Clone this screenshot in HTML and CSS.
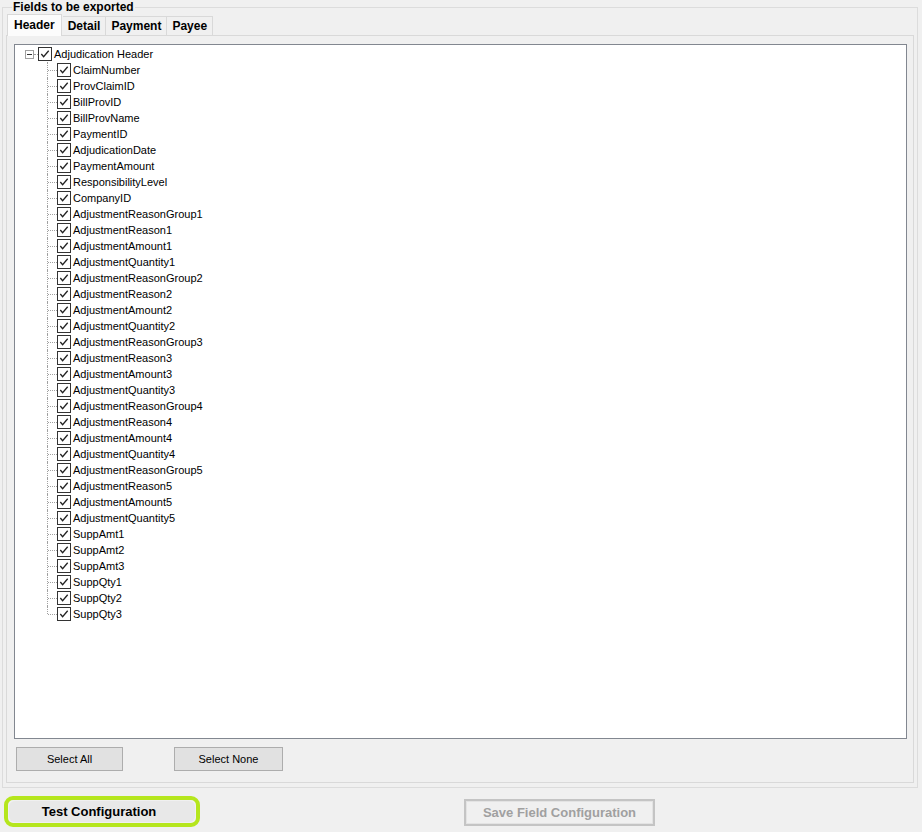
FILE: index.html
```html
<!DOCTYPE html>
<html lang="en">
<head>
  <meta charset="UTF-8" />
  <title>Fields to be exported</title>
  <link rel="stylesheet" href="styles.css">
</head>
<body>
  <fieldset class="group">
    <legend>Fields to be exported</legend>
    <div class="tabs">
      <div class="tab selected">Header</div>
      <div class="tab">Detail</div>
      <div class="tab">Payment</div>
      <div class="tab">Payee</div>
    </div>
    <div class="tab-page">
      <div class="tree">
        <div class="node root">
          <span class="expander"></span>
          <span class="stub"></span>
          <span class="check"><svg viewBox="0 0 13 13"><polyline points="2.5,6.5 5,9.5 10.5,3"/></svg></span>
          <span class="label">Adjudication Header</span>
        </div>
        <div class="children">
          <div class="node"><span class="branch"></span><span class="check"><svg viewBox="0 0 13 13"><polyline points="2.5,6.5 5,9.5 10.5,3"/></svg></span><span class="label">ClaimNumber</span></div>
          <div class="node"><span class="branch"></span><span class="check"><svg viewBox="0 0 13 13"><polyline points="2.5,6.5 5,9.5 10.5,3"/></svg></span><span class="label">ProvClaimID</span></div>
          <div class="node"><span class="branch"></span><span class="check"><svg viewBox="0 0 13 13"><polyline points="2.5,6.5 5,9.5 10.5,3"/></svg></span><span class="label">BillProvID</span></div>
          <div class="node"><span class="branch"></span><span class="check"><svg viewBox="0 0 13 13"><polyline points="2.5,6.5 5,9.5 10.5,3"/></svg></span><span class="label">BillProvName</span></div>
          <div class="node"><span class="branch"></span><span class="check"><svg viewBox="0 0 13 13"><polyline points="2.5,6.5 5,9.5 10.5,3"/></svg></span><span class="label">PaymentID</span></div>
          <div class="node"><span class="branch"></span><span class="check"><svg viewBox="0 0 13 13"><polyline points="2.5,6.5 5,9.5 10.5,3"/></svg></span><span class="label">AdjudicationDate</span></div>
          <div class="node"><span class="branch"></span><span class="check"><svg viewBox="0 0 13 13"><polyline points="2.5,6.5 5,9.5 10.5,3"/></svg></span><span class="label">PaymentAmount</span></div>
          <div class="node"><span class="branch"></span><span class="check"><svg viewBox="0 0 13 13"><polyline points="2.5,6.5 5,9.5 10.5,3"/></svg></span><span class="label">ResponsibilityLevel</span></div>
          <div class="node"><span class="branch"></span><span class="check"><svg viewBox="0 0 13 13"><polyline points="2.5,6.5 5,9.5 10.5,3"/></svg></span><span class="label">CompanyID</span></div>
          <div class="node"><span class="branch"></span><span class="check"><svg viewBox="0 0 13 13"><polyline points="2.5,6.5 5,9.5 10.5,3"/></svg></span><span class="label">AdjustmentReasonGroup1</span></div>
          <div class="node"><span class="branch"></span><span class="check"><svg viewBox="0 0 13 13"><polyline points="2.5,6.5 5,9.5 10.5,3"/></svg></span><span class="label">AdjustmentReason1</span></div>
          <div class="node"><span class="branch"></span><span class="check"><svg viewBox="0 0 13 13"><polyline points="2.5,6.5 5,9.5 10.5,3"/></svg></span><span class="label">AdjustmentAmount1</span></div>
          <div class="node"><span class="branch"></span><span class="check"><svg viewBox="0 0 13 13"><polyline points="2.5,6.5 5,9.5 10.5,3"/></svg></span><span class="label">AdjustmentQuantity1</span></div>
          <div class="node"><span class="branch"></span><span class="check"><svg viewBox="0 0 13 13"><polyline points="2.5,6.5 5,9.5 10.5,3"/></svg></span><span class="label">AdjustmentReasonGroup2</span></div>
          <div class="node"><span class="branch"></span><span class="check"><svg viewBox="0 0 13 13"><polyline points="2.5,6.5 5,9.5 10.5,3"/></svg></span><span class="label">AdjustmentReason2</span></div>
          <div class="node"><span class="branch"></span><span class="check"><svg viewBox="0 0 13 13"><polyline points="2.5,6.5 5,9.5 10.5,3"/></svg></span><span class="label">AdjustmentAmount2</span></div>
          <div class="node"><span class="branch"></span><span class="check"><svg viewBox="0 0 13 13"><polyline points="2.5,6.5 5,9.5 10.5,3"/></svg></span><span class="label">AdjustmentQuantity2</span></div>
          <div class="node"><span class="branch"></span><span class="check"><svg viewBox="0 0 13 13"><polyline points="2.5,6.5 5,9.5 10.5,3"/></svg></span><span class="label">AdjustmentReasonGroup3</span></div>
          <div class="node"><span class="branch"></span><span class="check"><svg viewBox="0 0 13 13"><polyline points="2.5,6.5 5,9.5 10.5,3"/></svg></span><span class="label">AdjustmentReason3</span></div>
          <div class="node"><span class="branch"></span><span class="check"><svg viewBox="0 0 13 13"><polyline points="2.5,6.5 5,9.5 10.5,3"/></svg></span><span class="label">AdjustmentAmount3</span></div>
          <div class="node"><span class="branch"></span><span class="check"><svg viewBox="0 0 13 13"><polyline points="2.5,6.5 5,9.5 10.5,3"/></svg></span><span class="label">AdjustmentQuantity3</span></div>
          <div class="node"><span class="branch"></span><span class="check"><svg viewBox="0 0 13 13"><polyline points="2.5,6.5 5,9.5 10.5,3"/></svg></span><span class="label">AdjustmentReasonGroup4</span></div>
          <div class="node"><span class="branch"></span><span class="check"><svg viewBox="0 0 13 13"><polyline points="2.5,6.5 5,9.5 10.5,3"/></svg></span><span class="label">AdjustmentReason4</span></div>
          <div class="node"><span class="branch"></span><span class="check"><svg viewBox="0 0 13 13"><polyline points="2.5,6.5 5,9.5 10.5,3"/></svg></span><span class="label">AdjustmentAmount4</span></div>
          <div class="node"><span class="branch"></span><span class="check"><svg viewBox="0 0 13 13"><polyline points="2.5,6.5 5,9.5 10.5,3"/></svg></span><span class="label">AdjustmentQuantity4</span></div>
          <div class="node"><span class="branch"></span><span class="check"><svg viewBox="0 0 13 13"><polyline points="2.5,6.5 5,9.5 10.5,3"/></svg></span><span class="label">AdjustmentReasonGroup5</span></div>
          <div class="node"><span class="branch"></span><span class="check"><svg viewBox="0 0 13 13"><polyline points="2.5,6.5 5,9.5 10.5,3"/></svg></span><span class="label">AdjustmentReason5</span></div>
          <div class="node"><span class="branch"></span><span class="check"><svg viewBox="0 0 13 13"><polyline points="2.5,6.5 5,9.5 10.5,3"/></svg></span><span class="label">AdjustmentAmount5</span></div>
          <div class="node"><span class="branch"></span><span class="check"><svg viewBox="0 0 13 13"><polyline points="2.5,6.5 5,9.5 10.5,3"/></svg></span><span class="label">AdjustmentQuantity5</span></div>
          <div class="node"><span class="branch"></span><span class="check"><svg viewBox="0 0 13 13"><polyline points="2.5,6.5 5,9.5 10.5,3"/></svg></span><span class="label">SuppAmt1</span></div>
          <div class="node"><span class="branch"></span><span class="check"><svg viewBox="0 0 13 13"><polyline points="2.5,6.5 5,9.5 10.5,3"/></svg></span><span class="label">SuppAmt2</span></div>
          <div class="node"><span class="branch"></span><span class="check"><svg viewBox="0 0 13 13"><polyline points="2.5,6.5 5,9.5 10.5,3"/></svg></span><span class="label">SuppAmt3</span></div>
          <div class="node"><span class="branch"></span><span class="check"><svg viewBox="0 0 13 13"><polyline points="2.5,6.5 5,9.5 10.5,3"/></svg></span><span class="label">SuppQty1</span></div>
          <div class="node"><span class="branch"></span><span class="check"><svg viewBox="0 0 13 13"><polyline points="2.5,6.5 5,9.5 10.5,3"/></svg></span><span class="label">SuppQty2</span></div>
          <div class="node last"><span class="branch"></span><span class="check"><svg viewBox="0 0 13 13"><polyline points="2.5,6.5 5,9.5 10.5,3"/></svg></span><span class="label">SuppQty3</span></div>
        </div>
      </div>
      <div class="select-buttons">
        <button class="btn">Select All</button>
        <button class="btn">Select None</button>
      </div>
    </div>
  </fieldset>

  <div class="footer">
    <div class="highlight">
      <button class="btn btn-bold">Test Configuration</button>
    </div>
    <button class="btn btn-bold btn-disabled" disabled>Save Field Configuration</button>
  </div>
</body>
</html>
```

FILE: styles.css
```css
body {
  margin: 0;
  background-color: #f0f0f0;
  font-family: 'Liberation Sans', Arial, sans-serif;
  font-size: 11px;
  color: #000;
  width: 922px;
  height: 832px;
  overflow: hidden;
}

.group {
  margin: 0 0 0 2px;
  padding: 3px 3px 4px 3px;
  width: 908px;
  height: 779px;
  border: 1px solid #dcdcdc;
  box-sizing: content-box;
  display: flex;
  flex-direction: column;
}

.group legend {
  padding: 0 1px;
  margin-left: 6px;
  font-weight: bold;
  font-size: 12px;
  line-height: 14px;
}

/* tabs */
.tabs {
  display: flex;
  align-items: flex-end;
  height: 22px;
  margin-top: -4px;
  padding-left: 1px;
}

.tab {
  height: 18px;
  line-height: 18px;
  padding: 0 5px;
  font-weight: bold;
  font-size: 12px;
  border: 1px solid #d9d9d9;
  border-bottom: none;
  border-left: none;
  background-color: #f0f0f0;
  color: #000;
}

.tab.selected {
  height: 21px;
  line-height: 20px;
  padding: 0 6px;
  margin-right: 1px;
  border-left: 1px solid #d9d9d9;
  background-color: #fcfcfc;
  position: relative;
  z-index: 1;
  margin-bottom: -1px;
}

.tab-page {
  flex: 1;
  border: 1px solid #d9d9d9;
  padding: 8px 6px 0 7px;
  display: flex;
  flex-direction: column;
}

/* tree */
.tree {
  height: 692px;
  padding-top: 1px;
  background-color: #fff;
  border: 1px solid #828790;
  overflow: hidden;
}

.node {
  display: flex;
  align-items: center;
  height: 16px;
  white-space: nowrap;
}

.root {
  padding-left: 10px;
}

.expander {
  width: 7px;
  height: 7px;
  border: 1px solid #a0a0a0;
  background-color: #fff;
  position: relative;
  flex: none;
}

.expander::after {
  content: "";
  position: absolute;
  left: 1px;
  right: 1px;
  top: 3px;
  height: 1px;
  background-color: #333;
}

.stub {
  width: 4px;
  border-top: 1px dotted #a0a0a0;
  flex: none;
}

.check {
  width: 12px;
  height: 12px;
  border: 1px solid #333;
  background-color: #fff;
  flex: none;
  display: flex;
}

.check svg {
  width: 12px;
  height: 12px;
  fill: none;
  stroke: #222;
  stroke-width: 1.4;
}

.label {
  padding-left: 2px;
  line-height: 16px;
}

.children {
  padding-left: 32px;
}

.branch {
  width: 10px;
  height: 16px;
  flex: none;
  position: relative;
  align-self: stretch;
}

.branch::before {
  content: "";
  position: absolute;
  left: 0;
  top: 0;
  bottom: 0;
  border-left: 1px dotted #a0a0a0;
}

.branch::after {
  content: "";
  position: absolute;
  left: 1px;
  right: 0;
  top: 8px;
  border-top: 1px dotted #a0a0a0;
}

.last .branch::before {
  bottom: 8px;
}

/* buttons */
.select-buttons {
  display: flex;
  gap: 51px;
  padding: 8px 0 0 2px;
}

.btn {
  font-family: 'Liberation Sans', Arial, sans-serif;
  font-size: 11px;
  color: #000;
  background-color: #e1e1e1;
  border: 1px solid #adadad;
  width: 107px;
  height: 24px;
  padding: 0;
  margin: 0;
}

.select-buttons .btn + .btn {
  width: 109px;
}

.footer {
  display: flex;
  align-items: center;
  padding: 8px 0 0 4px;
}

.highlight {
  border: 4px solid #b5e61d;
  border-radius: 9px;
  padding: 1px;
  width: 186px;
}

.btn-bold {
  font-weight: bold;
  font-size: 13px;
}

.highlight .btn {
  width: 186px;
  height: 21px;
  border: none;
  background-color: #e8e8e8;
  border-radius: 6px;
  padding-right: 6px;
}

.btn-disabled {
  margin-left: 264px;
  margin-top: 2px;
  width: 191px;
  height: 27px;
  color: #a0a0a0;
  background-color: #f0f0f0;
  border: 2px solid #c4c4c4;
  box-shadow: inset 0 0 0 1px #e3e3e3;
}
```
